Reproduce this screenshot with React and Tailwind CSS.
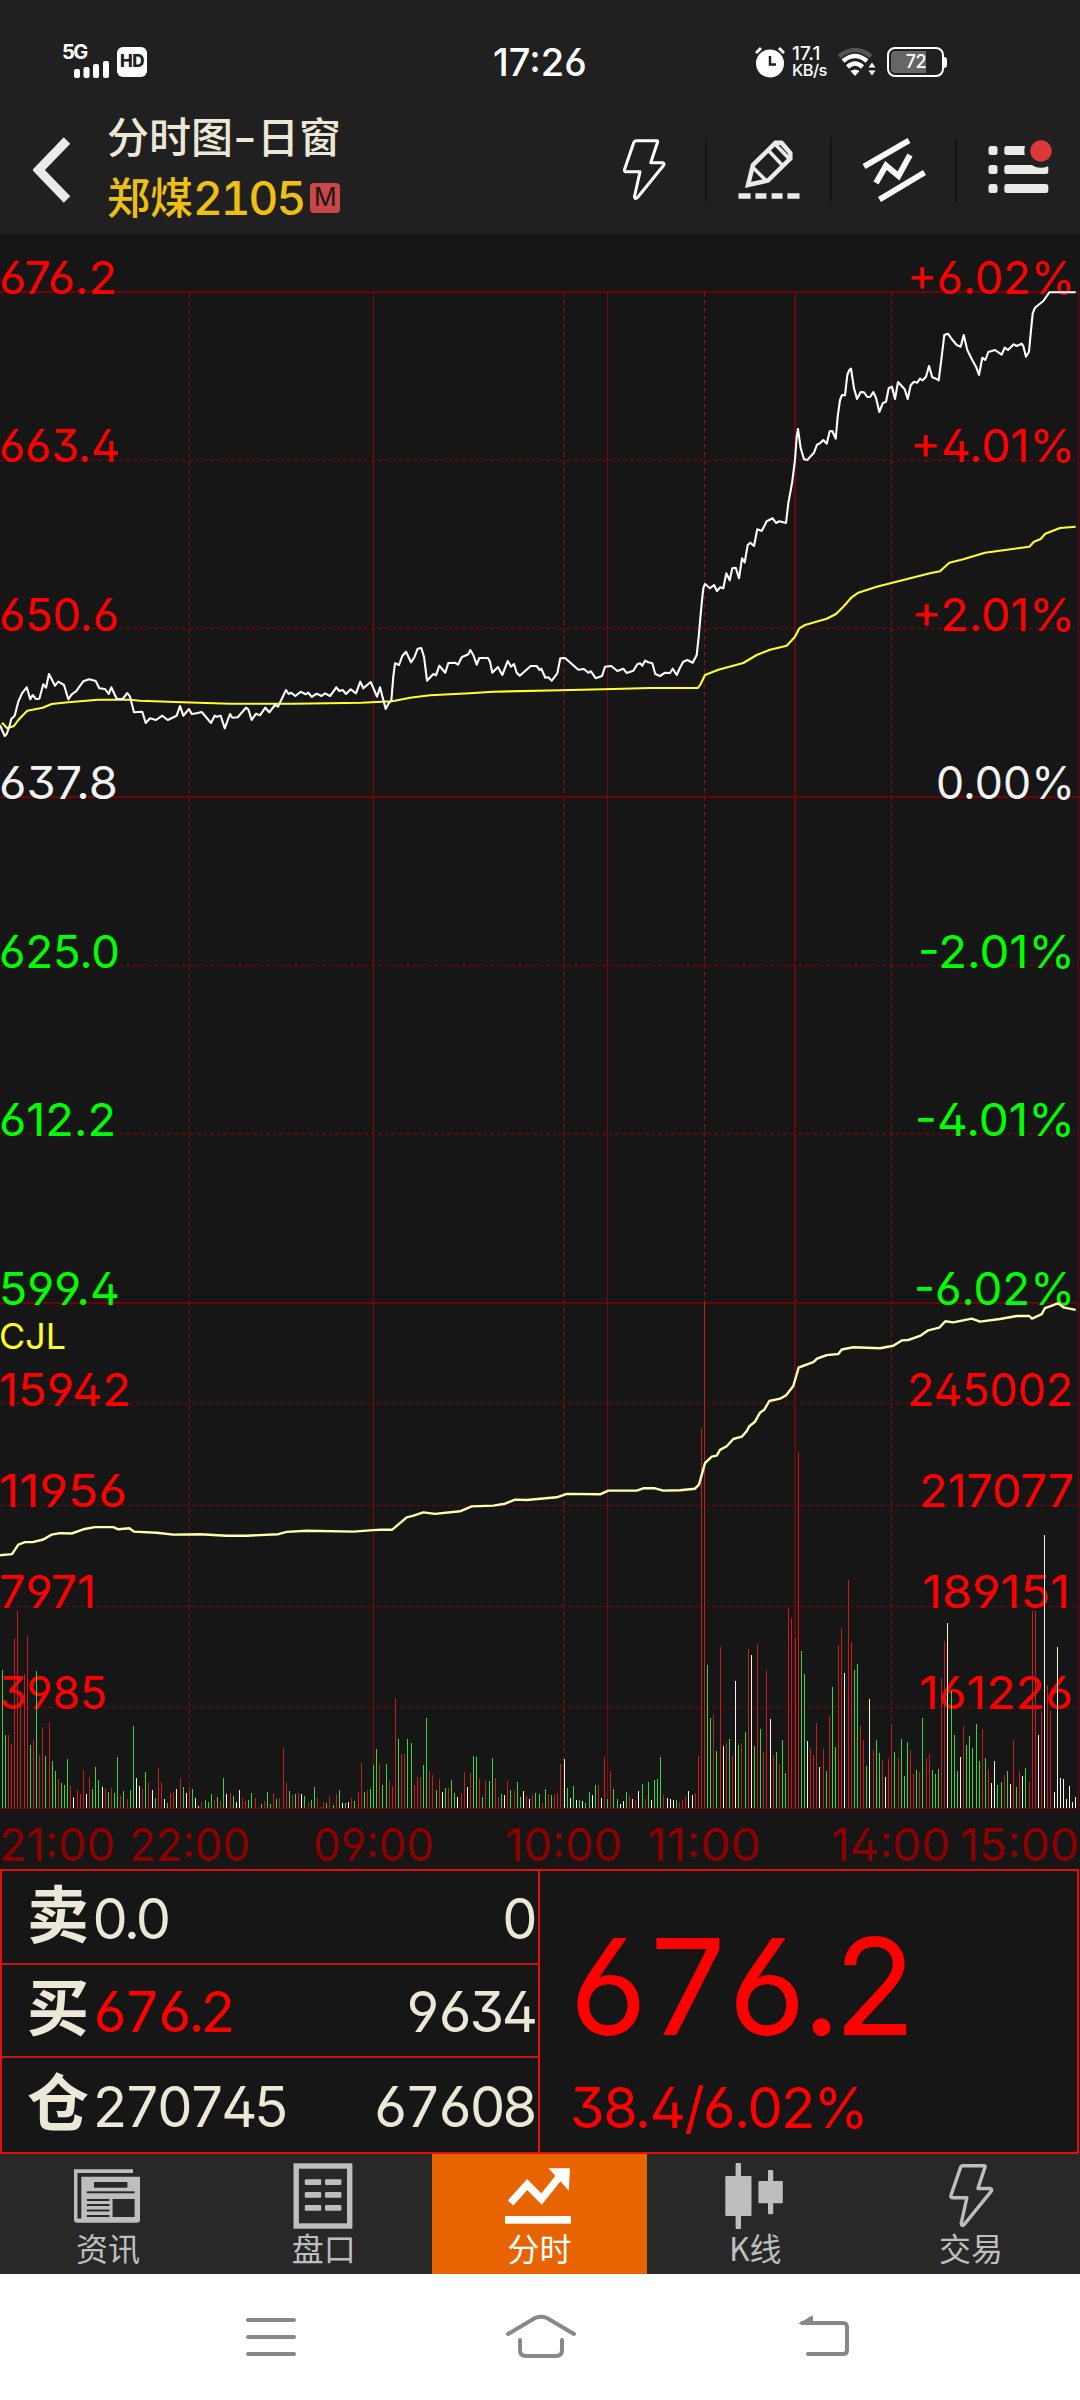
import React from 'react';

const NUM = "font-['Inter','Noto_Sans_CJK_SC',sans-serif] [font-feature-settings:'ss01']";
const TNUM = "[font-feature-settings:'ss01','tnum']";

// Chart samples: each chunk has its own origin and scale, data is "x,y x,y ..."
const PRICE = [
    { ox: 0, oy: 600, sy: 3, data: '0,375 6,390 14,408 20,402 28,380 34,357 44,347 55,305 66,280 80,262 91,298 98,285 108,297 118,296 130,253 138,263 147,222 165,257 175,245 192,255 205,298 215,283 228,274 250,244 268,238 287,243 298,265 315,267 326,282 334,262 350,296 368,297 382,279 390,290 402,337 427,335 437,369 450,355 468,360 487,347 503,360 530,347 540,318 550,347 567,327 575,342 590,340 605,336 633,369 644,347 650,350 662,347 674,385 690,342 697,353 713,352 738,323 745,328 755,360 768,341 780,346 796,323 808,337 825,315 834,320 858,270 866,282 873,278 886,288 902,275 917,283 925,278 935,291 950,281 965,288 975,280 990,288 1000,275 1009,262 1018,273 1028,270 1038,282 1052,268 1068,280 1081,245 1090,265 1112,246 1131,290 1140,262 1157,327 1166,310 1174,302 1180,230' },
    { ox: 360, oy: 600, sy: 3, data: '105,190 117,195 127,168 138,155 153,187 163,172 173,146 184,144 192,170 201,242 220,222 228,226 238,197 256,218 265,189 285,188 294,194 305,172 325,163 331,150 340,165 350,194 358,174 384,174 390,185 397,218 414,201 427,225 443,183 453,200 462,192 470,218 479,227 512,198 530,198 539,210 544,206 556,233 565,232 575,242 592,220 601,175 615,174 655,209 672,207 685,218 693,214 707,235 726,228 735,200 754,198 772,213 790,206 800,219 820,212 832,193 840,190 847,197 855,182 865,187 877,190 886,222 900,228 915,218 930,219 938,206 950,225' },
    { ox: 680, oy: 240, sy: 3, data: '0,1283 10,1265 22,1260 38,1268 50,1245 56,1190 60,1145 65,1090 70,1045 75,1032 90,1045 102,1035 111,1053 121,1042 130,1045 139,1000 149,1021 157,985 167,983 177,1015 186,955 194,967 203,915 211,908 222,918 232,868 245,873 260,844 278,835 288,849 298,844 318,849 325,790 336,730 345,660 350,590 354,567 362,625 372,658 382,660 402,638 411,614 420,610 430,600 440,611 449,574 457,573 467,596 473,530 480,480 486,465 495,466 502,405 508,390 513,386 522,445 531,477 542,456 552,457 562,471 571,470 580,456 588,473 598,516 608,490 618,485 626,445 636,440 645,477 654,426 674,448 683,477 692,436 702,425 712,428 720,416 728,421 738,410 747,378 757,412 768,416 776,421 785,350 793,285 804,281 815,297 830,315 842,320 851,285 862,330 875,357 888,380 897,405 907,353 916,360 925,336 945,330 965,344 974,323 984,330 1001,313 1010,318 1025,311 1030,318 1038,350 1047,335 1052,280 1058,220 1065,203 1090,183 1108,157 1187,157' },
];

const AVERAGE = [
    { ox: 0, oy: 600, sy: 3, data: '6,368 22,385 42,378 55,360 82,332 128,323 155,312 205,307 250,303 295,299 390,299 420,302 548,307 690,311 880,311 1085,308 1175,304' },
    { ox: 360, oy: 600, sy: 3, data: '105,302 150,293 210,286 330,280 400,275 600,271 730,268 870,264 960,264' },
    { ox: 680, oy: 240, sy: 3, data: '0,1344 54,1344 62,1332 75,1305 115,1289 190,1269 230,1245 270,1229 320,1217 345,1190 358,1165 375,1155 440,1136 468,1122 490,1100 515,1072 535,1058 590,1040 670,1020 750,1000 780,994 808,968 850,958 915,938 970,931 1048,920 1062,905 1082,897 1096,881 1140,864 1187,860' },
];

const OPEN_INTEREST = [
    { ox: 0, oy: 1290, sy: 2.6576, data: '0,705 36,702 55,677 75,670 98,670 130,663 155,650 180,646 215,647 250,636 285,630 340,630 355,636 388,633 402,642 470,645 520,650 600,649 680,653 740,653 835,649 860,643 920,640 1060,642 1120,638' },
    { ox: 380, oy: 1290, sy: 2.6576, data: '0,637 37,637 80,604 98,600 130,591 165,595 240,588 275,575 340,573 375,568 405,557 440,558 530,551 560,542 660,543 685,533 770,533 790,527 825,527 850,533' },
    { ox: 680, oy: 1290, sy: 2.6576, data: '0,532 45,528 57,517 75,460 95,443 110,440 120,425 140,415 160,396 185,390 200,375 208,362 225,350 240,326 253,318 268,295 300,289 318,280 340,255 356,206 400,192 412,182 440,173 475,170 485,158 520,152 600,155 640,148 665,134 685,133 720,122 745,107 778,100 796,83 820,86 875,76 900,84 960,77 1010,69 1048,69 1056,76 1085,64 1095,48 1120,40 1135,35 1150,46 1187,53' },
];

// r = up, g = down, w = flat
const VOLUME = [
    { ox: 0, data: 'g8,1010 g16,1183 r25,1183 r34,1207 r43,925 r52,853 r61,1100 r73,1021 r82,920 g91,1210 r100,1196 g109,1013 r118,1236 r127,1161 g136,1238 r148,1148 g157,1252 g166,1278 r175,1300 g184,1310 g193,1316 g202,1246 r211,1318 w220,1347 r232,1329 r241,1339 r250,1276 w259,1340 r268,1294 g277,1326 g286,1268 g295,1302 w307,1321 r316,1326 g325,1334 r334,1323 g343,1337 g352,1241 r361,1345 g370,1331 r382,1353 g391,1329 g400,1159 w409,1297 w418,1318 r427,1326 g436,1281 r445,1310 w457,1329 g466,1350 r475,1270 r484,1308 w493,1353 g502,1363 r511,1337 r520,1334 w529,1326 r541,1297 g550,1321 w559,1337 r568,1321 g577,1326 w586,1350 w595,1371 r604,1361 g616,1355 g625,1361 g634,1339 r643,1355 g652,1347 r661,1358 g670,1297 w679,1339 r691,1337 g700,1345 w709,1361 w718,1329 r727,1350 r736,1358 g745,1355 g754,1337 r766,1350 r775,1374 g784,1366 r793,1358 g802,1334 g811,1366 r820,1337 g829,1353 r838,1350 r850,1217 r859,1310 g868,1331 r877,1342 g886,1339 r895,1337 w904,1339 g913,1345 r925,1361 g934,1355 g943,1321 r952,1350 r961,1374 r970,1361 g979,1363 r988,1345 g1000,1369 r1009,1339 g1018,1329 w1027,1363 g1036,1363 w1045,1361 r1054,1350 g1063,1358 r1075,1334 r1084,1257 g1093,1334 r1102,1329 g1111,1326 g1120,1262 g1129,1220 r1138,1260 g1147,1316 g1159,1260 r1168,1305 r1177,1318 r1186,1084 g1195,1193' },
    { ox: 380, data: 'r64,1233 r73,1233 g82,1193 g94,1204 r103,1316 r112,1294 r121,1294 g130,1262 g139,1137 r148,1278 r157,1289 g169,1329 r178,1300 w187,1334 g196,1323 r205,1323 g214,1302 g223,1337 w232,1347 r244,1337 r253,1281 w262,1321 r271,1284 g280,1238 g289,1241 r298,1300 g307,1347 r316,1305 g328,1305 g337,1244 r346,1297 r355,1347 g364,1339 w373,1342 r382,1305 g391,1329 r403,1331 g412,1308 g421,1347 w430,1331 r439,1345 w448,1353 r457,1342 g466,1337 g478,1339 r487,1363 g496,1326 r505,1339 g514,1342 r523,1342 r532,1337 r541,1260 w553,1246 g562,1323 w571,1350 g580,1318 w589,1355 g598,1355 w607,1358 g616,1363 g628,1334 w637,1342 g646,1316 r655,1316 w664,1350 r673,1241 g682,1353 r691,1278 g700,1326 g712,1353 w721,1366 w730,1358 g739,1334 r748,1345 w757,1353 r766,1355 w775,1331 g787,1313 r796,1353 g805,1308 w814,1355 g823,1302 g832,1300 g841,1241 r850,1342 w862,1350 w871,1353 w880,1355 g889,1355 r898,1361' },
    { ox: 680, data: 'r8,1355 r16,1347 w25,1331 w37,1342 r46,1337 r55,1238 r64,367 r73,32 g82,997 g91,1137 r100,1127 g109,1225 r121,949 w130,1212 r139,1204 g148,1193 r157,1238 w166,1039 g175,1210 r184,1204 g196,1175 r205,954 w214,970 g223,1212 r232,941 g241,1167 r250,1228 r259,1013 w271,1140 r280,1236 g289,1228 r298,1260 g307,1196 g316,1284 r325,845 r334,872 r346,925 r355,431 g364,960 g373,1021 w382,1199 r391,1217 r400,1236 r409,1151 w418,1268 r430,1220 g439,1278 r448,1132 g457,1055 g466,1215 r475,943 r484,898 w493,1018 r505,771 r514,935 g523,1010 g532,994 r541,1159 r550,1196 g559,1265 w568,1087 r580,1223 g589,1196 g598,1230 r607,1249 w616,1294 r625,1246 r634,1156 g643,1228 r655,1244 g664,1193 g673,1292 g682,1201 r691,1223 r700,1286 g709,1276 r718,1281 g727,1137 r739,1244 r748,1233 g757,1276 g766,1286 g775,1273 r784,1031 r793,933 w802,885 g814,1065 g823,1183 g832,1278 w841,1241 r850,1159 g859,1210 g868,1185 g877,1217 g889,1153 g898,1252 r907,1167 g916,1244 r925,1273 w934,1310 w943,1252 g952,1316 g964,1308 r973,1289 g982,1278 w991,1313 r1000,1196 g1009,1321 r1018,1278 w1027,1292 g1036,1270 r1048,1308 r1057,853 r1066,853 w1075,1183 r1084,1119 w1093,651 r1102,1050 r1111,1119 w1123,1334 w1132,949 w1141,1297 w1150,1300 w1159,1353 w1168,1318 w1177,1361 w1186,1347' },
];

const toPoints = (chunks) =>
    chunks
        .flatMap(({ ox, oy, sy, data }) =>
            data.split(' ').map((pair) => {
                const [x, y] = pair.split(',').map(Number);
                return `${(ox + x / 3).toFixed(1)},${(oy + y / sy).toFixed(1)}`;
            })
        )
        .join(' ');

const barPath = (kind) =>
    VOLUME.flatMap(({ ox, data }) =>
        data
            .split(' ')
            .filter((bar) => bar[0] === kind)
            .map((bar) => {
                const [x, top] = bar.slice(1).split(',').map(Number);
                return `M${ox + Math.floor(x / 3) + 0.5} 1808V${Math.round(1290 + top / 2.6576)}`;
            })
    ).join('');

// [text, baseline, left, right, color]
const LABELS = [
    ['676.2', 294, 0, 116, '#ff0000'],
    ['663.4', 462, 0, 119, '#ff0000'],
    ['650.6', 630.5, 0, 118, '#ff0000'],
    ['637.8', 799, 0, 117, '#f2f2f2'],
    ['625.0', 967.5, 0, 119, '#00ff00'],
    ['612.2', 1136, 0, 115, '#00ff00'],
    ['599.4', 1304.5, 0, 119, '#00ff00'],
    ['+6.02%', 294, 908, 1074, '#ff0000'],
    ['+4.01%', 462, 911, 1074, '#ff0000'],
    ['+2.01%', 630.5, 912, 1074, '#ff0000'],
    ['0.00%', 799, 937, 1074, '#f2f2f2'],
    ['-2.01%', 967.5, 919, 1074, '#00ff00'],
    ['-4.01%', 1136, 916, 1074, '#00ff00'],
    ['-6.02%', 1304.5, 915, 1074, '#00ff00'],
    ['15942', 1406, 0, 130, '#ff0000'],
    ['11956', 1507, 0, 126, '#ff0000'],
    ['7971', 1608, 0, 95, '#ff0000'],
    ['3985', 1709, 0, 106, '#ff0000'],
    ['245002', 1406, 908, 1072, '#ff0000'],
    ['217077', 1507, 920, 1073, '#ff0000'],
    ['189151', 1608, 923, 1069, '#ff0000'],
    ['161226', 1709, 920, 1072, '#ff0000'],
    ['21:00', 1861, 0, 114, '#8c0000'],
    ['22:00', 1861, 130, 249, '#8c0000'],
    ['09:00', 1861, 314, 433, '#8c0000'],
    ['10:00', 1861, 506, 621, '#8c0000'],
    ['11:00', 1861, 648, 760, '#8c0000'],
    ['14:00', 1861, 832, 949, '#8c0000'],
    ['15:00', 1861, 961, 1078, '#8c0000'],
];

const Chart = () => (
    <svg width="1080" height="1635" viewBox="0 234 1080 1635" className={`block overflow-visible bg-[#161616] ${NUM}`}>
        {/* grid */}
        <g fill="none" stroke="#6e0404">
            <path d="M0 292H1079M0 797H1079M0 1303H1079" strokeWidth="2" />
            <path d="M0 460.5H1079M0 628.5H1079M0 965.5H1079M0 1134H1079" strokeWidth="1.6" strokeDasharray="4 3" stroke="#6a0808" />
            <path d="M0 1403.5H1079M0 1505.5H1079M0 1606.5H1079M0 1707.5H1079" strokeDasharray="5 3" stroke="#6a0808" />
            <path d="M373.5 292V1808M607.5 292V1808" stroke="#800808" />
            <path d="M795 292V1808" strokeWidth="2" stroke="#600a0a" />
            <path d="M1078.5 292V1808" stroke="#780808" />
            <path d="M189.5 292V1808M704.5 292V1808M891.5 292V1808" strokeDasharray="5 3" stroke="#881212" />
            <path d="M564 292V1808" strokeWidth="2" strokeDasharray="5 3" stroke="#501414" />
            <path d="M0 1808.5H1079" stroke="#7a0404" />
        </g>
        {LABELS.map(([text, y, left, right, color]) => (
            <text
                key={text}
                x={left - 1}
                y={y}
                fill={color}
                fontSize="45"
                textLength={right - left + 2}
                lengthAdjust="spacingAndGlyphs"
            >
                {text}
            </text>
        ))}
        <text x="-1" y="1349" fill="#ffff20" fontSize="36" textLength="67" lengthAdjust="spacingAndGlyphs">CJL</text>
        <g fill="none">
            <path d={barPath('r')} stroke="#c41e1e" />
            <path d={barPath('g')} stroke="#3cd43c" />
            <path d={barPath('w')} stroke="#f4f3e8" />
        </g>
        <g fill="none" strokeWidth="2.1" strokeLinejoin="round">
            <polyline points={toPoints(AVERAGE)} stroke="#ffff2e" />
            <polyline points={toPoints(PRICE)} stroke="#ffffff" />
            <polyline points={toPoints(OPEN_INTEREST)} stroke="#ffffb0" strokeWidth="2.4" />
        </g>
    </svg>
);

const StatusBar = () => (
    <div className="flex h-24 pt-7 items-center text-white">
        <div className="flex items-center w-[492px] pl-[62px]">
            <div className="relative w-[48px] h-8">
                <span className="absolute left-0 -top-1 text-[20px] leading-5 font-bold tracking-[-1.5px]">5G</span>
                <svg width="36" height="18" viewBox="0 0 36 18" className="absolute left-3 bottom-0 fill-white">
                    <rect x="0" y="9" width="6" height="9" rx="2" />
                    <rect x="9.500" y="7" width="6" height="11" rx="2" />
                    <rect x="19" y="4" width="6" height="14" rx="2" />
                    <rect x="29" y="1" width="6" height="17" rx="2" />
                </svg>
            </div>
            <div className="ml-[7px] flex items-center justify-center w-[30px] h-[30px] rounded-md bg-white text-[#202020] text-[17px] font-extrabold tracking-[-0.5px]">
                HD
            </div>
        </div>
        <div className="w-[263px] pl-px text-[38px] leading-none font-medium">17:26</div>
        <svg width="30" height="32" viewBox="0 0 30 32" className="fill-white">
            <circle cx="15" cy="17.500" r="14" />
            <path d="M1 7L6 2M29 7L24 2" stroke="#fff" strokeWidth="3" />
            <path d="M15 10V18.500H21" stroke="#202020" strokeWidth="2.500" fill="none" />
        </svg>
        <div className="ml-[7px] w-[45px] font-medium">
            <div className="text-[19px] leading-[17px]">17.1</div>
            <div className="text-[16.5px] leading-[17px] tracking-[-0.6px]">KB/s</div>
        </div>
        <svg width="40" height="30" viewBox="0 0 40 30" fill="none">
            <path d="M2 9.500Q18 -3.500 34 9.500" stroke="#555" strokeWidth="4.500" />
            <path d="M6 14Q18 4 30 14" stroke="#fff" strokeWidth="4.500" />
            <path d="M10.500 20Q18 13 25.500 20" stroke="#fff" strokeWidth="4.500" />
            <path d="M18 29L13.500 24Q18 21 22.500 24Z" fill="#fff" />
            <path d="M31.500 20.500L35 15.500L38.500 20.500ZM31.500 23.500L35 28.500L38.500 23.500Z" fill="#fff" />
        </svg>
        <div className="ml-[10px] flex items-center">
            <div className="flex w-[57px] h-[30px] border-2 border-white rounded-lg p-0.5">
                <div className="w-[35px] h-full bg-[#666] rounded-l-sm text-[18px] leading-[22px] font-medium text-right tracking-[-0.5px]">72</div>
            </div>
            <div className="w-[3px] h-[11px] bg-white rounded-r" />
        </div>
    </div>
);

const Bolt = ({ size, width }) => (
    <svg width={size} height={size} viewBox="0 0 64 64" fill="none" stroke="currentColor" strokeWidth={width} strokeLinejoin="round">
        <path d="M24.200 2.700H44.600Q46 2.700 45.600 4L38.700 24.700H50.500Q53 25.500 51.500 27.500L25.500 59.500Q23 62 22.500 58.500L28 33.700H14Q12 33.500 12.500 31.500L21.800 4.500Q22.500 2.700 24.200 2.700Z" />
    </svg>
);

const PencilIcon = () => (
    <svg width="64" height="64" viewBox="0 0 64 64" fill="none" stroke="#eceae8" strokeWidth="4.500">
        <path d="M11 47L16 27L38.500 4.700H44.500L53.300 15V20.500L31 42.500Z" />
        <path d="M31.500 12.500L46.500 28.500M15 28.500L30 43.500M38.500 6.500L51.500 20" strokeWidth="3.500" />
        <path d="M1.500 58H13.600M18.400 58H29.400M34.600 58H45.600M50.400 58H62.500" strokeWidth="5.500" />
    </svg>
);

const ChannelIcon = () => (
    <svg width="64" height="64" viewBox="0 0 64 64" fill="none" stroke="#fafafa" strokeWidth="5.800">
        <path d="M2 28.500L47 2.500M17.500 61.500L62.500 34.500" />
        <path d="M14 45L24 27.500L36.500 38L48 17" />
    </svg>
);

const ListIcon = () => (
    <svg width="64" height="64" viewBox="0 0 64 64" fill="#eceae8" className="overflow-visible">
        <rect x="0.500" y="8" width="9" height="9" rx="2.500" />
        <rect x="0.500" y="27" width="9" height="9" rx="2.500" />
        <rect x="0.500" y="46" width="9" height="9" rx="2.500" />
        <rect x="16.300" y="8" width="40" height="9" rx="2.500" />
        <rect x="16.300" y="27" width="44" height="9" rx="2.500" />
        <rect x="16.300" y="46" width="44" height="9" rx="2.500" />
        <circle cx="53" cy="13" r="16.700" fill="#202020" />
        <circle cx="53" cy="13" r="10.700" fill="#dc3838" />
    </svg>
);

const TOOLS = [<Bolt size={64} width={3} />, <PencilIcon />, <ChannelIcon />, <ListIcon />];

const Header = () => (
    <div className="flex h-[138px] items-start">
        <svg width="38" height="66" viewBox="0 0 38 66" className="ml-[33px] mt-[41px] shrink-0" fill="none" stroke="#eceae8" strokeWidth="9">
            <path d="M34 3.500L5.500 33L34 62.500" />
        </svg>
        <div className="ml-[36px] mt-[17px] w-[475px] shrink-0">
            <div className="text-[42px] leading-[50px] font-medium text-[#ece8d8]">
                分时图<span className="inline-block w-[24px] text-center scale-x-125">-</span>日窗
            </div>
            <div className="flex items-center mt-[5px] text-[#efc014]">
                <span className="text-[43px] leading-[60px] font-medium">郑煤</span>
                <span className={`text-[46px] leading-[60px] tracking-[-2px] font-medium ${TNUM}`}>2105</span>
                <span className="ml-[6px] flex items-center justify-center w-[30px] h-[30px] rounded-sm bg-[#c84848] text-[#201414] text-[25px]">M</span>
            </div>
        </div>
        <div className="flex mt-[42px] text-white">
            {TOOLS.map((icon, i) => (
                <div
                    key={i}
                    className={`flex justify-center w-[125px] h-16 shrink-0 ${i < 3 ? 'border-r-2 border-[#141414]' : ''}`}
                >
                    {icon}
                </div>
            ))}
        </div>
    </div>
);

const QuoteRow = ({ label, value, amount, valueClass = '' }) => (
    <div className={`flex items-center pl-[25px] pr-px pt-[4px] text-[#ece8d8] ${NUM}`}>
        <span className="text-[62px] leading-none font-bold -mt-1.5">{label}</span>
        <span className={`ml-[3px] text-[56px] leading-none tracking-[-4px] ${TNUM} ${valueClass}`}>{value}</span>
        <span className={`ml-auto text-[56px] leading-none tracking-[-4px] pr-[3px] ${TNUM}`}>{amount}</span>
    </div>
);

const Quote = () => (
    <div className={`relative flex w-[1079px] h-[285px] border-[2px] border-[#e01010] bg-[#161616] ${NUM}`}>
        <div className="grid grid-rows-3 w-[538px] border-r-2 border-[#e01010] divide-y-2 divide-[#c01818]">
            <QuoteRow label="卖" value="0.0" amount="0" />
            <QuoteRow label="买" value="676.2" amount="9634" valueClass="text-[#ff0000]" />
            <QuoteRow label="仓" value="270745" amount="67608" />
        </div>
        <div className="flex flex-col pl-[30px] text-[#ff0000]">
            <div className={`-ml-[5px] mt-[48px] text-[134px] leading-[134px] tracking-[-7.5px] ${TNUM}`}>676.2</div>
            <div className="mt-[27px] text-[56px] leading-[56px] tracking-[-1.5px]">38.4/6.02%</div>
        </div>
    </div>
);

const NewsIcon = () => (
    <svg width="66" height="66" viewBox="0 0 66 66" className="overflow-visible">
        <path d="M-1 6.300H58V10H2.500V55.500H6.300V13.700H65V57Q65 59.700 62 59.700H2Q-1 59.700 -1 56.500Z" fill="#bebebe" />
        <g fill="#282828">
            <rect x="19" y="19" width="33.400" height="5.700" />
            <rect x="11.800" y="28.300" width="47.800" height="2" />
            <rect x="11.800" y="36" width="22.700" height="2" />
            <rect x="11.800" y="41" width="22.700" height="2" />
            <rect x="11.800" y="46.500" width="22.700" height="2" />
            <rect x="11.800" y="52" width="22.700" height="2" />
            <rect x="37.600" y="36" width="22" height="18" />
        </g>
    </svg>
);

const BoardIcon = () => (
    <svg width="66" height="66" viewBox="0 0 66 66">
        <rect x="5.200" y="3" width="53.500" height="60" fill="none" stroke="#bebebe" strokeWidth="5.400" />
        <g fill="#bebebe">
            {[16.3, 29, 42].map((y) => (
                <React.Fragment key={y}>
                    <rect x="13.800" y={y} width="16.400" height="5.700" rx="1" />
                    <rect x="34" y={y} width="16.400" height="5.700" rx="1" />
                </React.Fragment>
            ))}
        </g>
    </svg>
);

const TrendIcon = () => (
    <svg width="66" height="66" viewBox="0 0 66 66" className="overflow-visible">
        <path d="M4.500 40L21.200 21.500L35.500 36L54 13" fill="none" stroke="#fff" strokeWidth="7.500" />
        <path d="M42.500 5.300H64L62.800 27.700Z" fill="#fff" />
        <rect x="-1" y="53" width="66" height="7.700" fill="#fff" />
    </svg>
);

const CandleIcon = () => (
    <svg width="66" height="66" viewBox="0 0 66 66" fill="#bebebe">
        <rect x="13.600" y="0" width="5.400" height="66" rx="1" />
        <rect x="3.300" y="13" width="26.200" height="40" rx="1" />
        <rect x="46" y="7" width="5.200" height="44.300" rx="1" />
        <rect x="36.400" y="18" width="24.400" height="22.300" rx="1" />
    </svg>
);

const TABS = [
    { label: '资讯', icon: <NewsIcon /> },
    { label: '盘口', icon: <BoardIcon /> },
    { label: '分时', icon: <TrendIcon />, active: true },
    { label: 'K线', icon: <CandleIcon /> },
    { label: '交易', icon: <Bolt size={66} width={3.3} /> },
];

const TabBar = () => (
    <div className="h-[120px] bg-[#282828]">
        <div className="grid grid-cols-5 w-[1079px] h-full">
            {TABS.map(({ label, icon, active }) => (
                <div
                    key={label}
                    className={`flex flex-col items-center pt-[9px] ${active ? 'bg-[#e86400] text-white' : 'text-[#bebebe]'}`}
                >
                    {icon}
                    <span className="-mt-[2px] text-[32px] leading-[40px] font-['Noto_Sans_CJK_SC',sans-serif]">{label}</span>
                </div>
            ))}
        </div>
    </div>
);

const SystemNav = () => (
    <div className="flex items-center h-[126px] pl-[246px] bg-white">
        <svg width="50" height="46" viewBox="0 0 50 46" stroke="#888" strokeWidth="4" strokeLinecap="round">
            <path d="M2 6H48M2 23H48M2 40H48" />
        </svg>
        <svg width="72" height="46" viewBox="0 0 72 46" className="ml-[209px]" fill="none" stroke="#888" strokeWidth="4" strokeLinecap="round">
            <path d="M3 20L30 4Q36 1.500 42 4L69 20" />
            <path d="M15 26V36Q15 42 21 42H51Q57 42 57 36V26" />
        </svg>
        <svg width="52" height="46" viewBox="0 0 52 46" className="ml-[221px]" fill="none" stroke="#888" strokeWidth="4" strokeLinecap="round">
            <path d="M4 9H45Q49 9 49 13V36Q49 40 45 40H10" />
            <path d="M0 10L14 1.500Q15 1.500 15 3V10Z" fill="#888" stroke="none" />
        </svg>
    </div>
);

const App = () => (
    <div className="w-[1080px] h-[2400px] overflow-hidden bg-[#161616]">
        <div className={`bg-[#202020] ${NUM}`}>
            <StatusBar />
            <Header />
        </div>
        <Chart />
        <Quote />
        <TabBar />
        <SystemNav />
    </div>
);

export default App;
